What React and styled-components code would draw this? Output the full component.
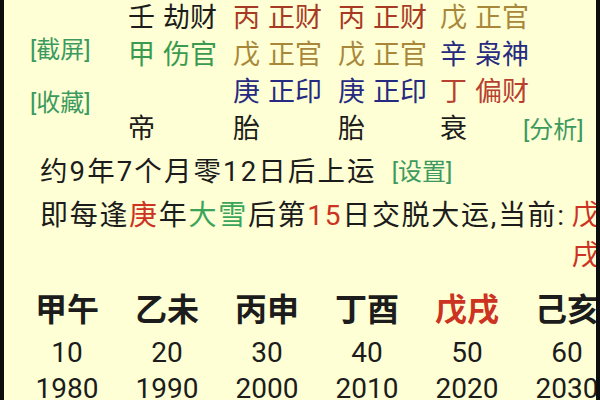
import React from "react";
import styled, { createGlobalStyle } from "styled-components";

const C = {
  bg: "#FEFFD4",
  ink: "#1c1c1c",
  brown: "#a83a25",
  olive: "#a8873a",
  blue: "#262a80",
  green: "#3a9a50",
  red: "#b84030",
  label: "#3c9a60",
  hot: "#cc3322",
  snow: "#3aa55a",
};

const Global = createGlobalStyle`
  html, body { margin: 0; padding: 0; background: ${C.bg}; }
`;

const Frame = styled.div`
  width: 600px;
  height: 400px;
  box-sizing: border-box;
  overflow: hidden;
  background: ${C.bg};
  border-left: 4px solid #0d0d0d;
  border-right: 4px solid #0d0d0d;
  color: ${C.ink};
  font-family: Roboto, "Noto Sans CJK SC", sans-serif;
  font-weight: 400;
  display: flex;
  flex-direction: column;
`;

const PillarGrid = styled.div`
  display: grid;
  grid-template-columns: 124px 105px 105px 102px 83px 1fr;
  grid-template-rows: repeat(4, 37px);
  align-items: center;
  font-size: 27px;
  line-height: 37px;
`;

const Labels = styled.div`
  grid-column: 1;
  grid-row: 1 / span 4;
  align-self: start;
  display: flex;
  flex-direction: column;
  gap: 25px;
  padding: 36px 0 0 26px;
`;

const Tag = styled.span`
  font-size: 24px;
  line-height: 28px;
  color: ${C.label};
  white-space: nowrap;
`;

const Cell = styled.div`
  grid-column: ${(p) => p.$col};
  grid-row: ${(p) => p.$row};
  display: flex;
  gap: 8px;
  white-space: nowrap;
  color: ${(p) => p.$color || C.ink};
`;

const Info = styled.div`
  display: flex;
  flex-direction: column;
  padding-left: 36px;
  margin-top: 2px;
`;

const Line = styled.div`
  display: flex;
  align-items: ${(p) => (p.$top ? "flex-start" : "center")};
  white-space: nowrap;
`;

const Sentence = styled.span`
  font-size: ${(p) => p.$size}px;
  line-height: 44px;
  letter-spacing: ${(p) => p.$spacing || 0}px;
`;

const Hi = styled.span`
  color: ${(p) => p.$color};
`;

const Current = styled.span`
  flex-shrink: 0;
  width: 28px;
  margin: 2px 0 0 6px;
  font-size: 28px;
  line-height: 40px;
  color: ${C.hot};
  white-space: normal;
  word-break: break-all;
`;

const SetTag = styled(Tag)`
  margin-left: 15px;
`;

const Luck = styled.div`
  display: grid;
  grid-template-columns: repeat(6, 100px);
  grid-template-rows: 46px 36px 36px;
  padding-left: 13px;
  margin-top: 13px;
  text-align: center;
  white-space: nowrap;
`;

const Name = styled.div`
  font-size: 32px;
  line-height: 42px;
  font-weight: 700;
  color: ${(p) => (p.$active ? C.hot : C.ink)};
`;

const Num = styled.div`
  font-size: 28px;
  line-height: 36px;
`;

const rows = [
  [
    { s: "壬", g: "劫财", c: C.ink },
    { s: "丙", g: "正财", c: C.brown },
    { s: "丙", g: "正财", c: C.brown },
    { s: "戊", g: "正官", c: C.olive },
  ],
  [
    { s: "甲", g: "伤官", c: C.green },
    { s: "戊", g: "正官", c: C.olive },
    { s: "戊", g: "正官", c: C.olive },
    { s: "辛", g: "枭神", c: C.blue },
  ],
  [
    null,
    { s: "庚", g: "正印", c: C.blue },
    { s: "庚", g: "正印", c: C.blue },
    { s: "丁", g: "偏财", c: C.red },
  ],
];

const phases = ["帝", "胎", "胎", "衰"];

const luck = [
  { n: "甲午", a: 10, y: 1980 },
  { n: "乙未", a: 20, y: 1990 },
  { n: "丙申", a: 30, y: 2000 },
  { n: "丁酉", a: 40, y: 2010 },
  { n: "戊戌", a: 50, y: 2020, active: true },
  { n: "己亥", a: 60, y: 2030 },
];

export default function App() {
  return (
    <Frame>
      <Global />
      <PillarGrid>
        <Labels>
          <Tag>[截屏]</Tag>
          <Tag>[收藏]</Tag>
        </Labels>
        {rows.map((r, ri) =>
          r.map((p, ci) =>
            p ? (
              <Cell key={`${ri}-${ci}`} $row={ri + 1} $col={ci + 2} $color={p.c}>
                <span>{p.s}</span>
                <span>{p.g}</span>
              </Cell>
            ) : null
          )
        )}
        {phases.map((ph, i) => (
          <Cell key={`ph-${i}`} $row={4} $col={i + 2}>
            {ph}
          </Cell>
        ))}
        <Cell $row={4} $col={6}>
          <Tag>[分析]</Tag>
        </Cell>
      </PillarGrid>

      <Info>
        <Line>
          <Sentence $size={27.5} $spacing={2.1}>约9年7个月零12日后上运</Sentence>
          <SetTag>[设置]</SetTag>
        </Line>
        <Line $top>
          <Sentence $size={28} $spacing={1.7}>
            即每逢<Hi $color={C.hot}>庚</Hi>年<Hi $color={C.snow}>大雪</Hi>后第
            <Hi $color={C.hot}>15</Hi>日交脱大运,当前:{" "}
          </Sentence>
          <Current>戊戌</Current>
        </Line>
      </Info>

      <Luck>
        {luck.map((l) => (
          <Name key={l.n} $active={l.active}>
            {l.n}
          </Name>
        ))}
        {luck.map((l) => (
          <Num key={`a${l.a}`}>{l.a}</Num>
        ))}
        {luck.map((l) => (
          <Num key={`y${l.y}`}>{l.y}</Num>
        ))}
      </Luck>
    </Frame>
  );
}
